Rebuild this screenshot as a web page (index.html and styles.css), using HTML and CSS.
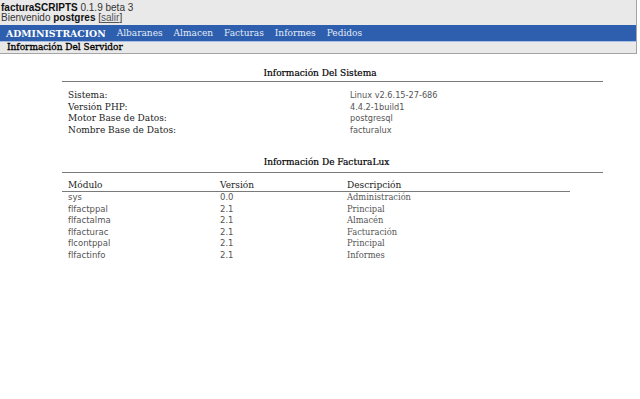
FILE: index.html
```html
<!DOCTYPE html>
<html lang="es">
<head>
    <meta charset="UTF-8">
    <title>facturaSCRIPTS</title>
    <link rel="stylesheet" href="styles.css">
</head>
<body>

    <div class="top">
        <div class="brand"><b>facturaSCRIPTS</b> 0.1.9 beta 3</div>
        <div class="welcome">Bienvenido <b>postgres</b> [<a href="#">salir</a>]</div>
        <div class="menu">
            <a class="module" href="#">ADMINISTRACION</a>
            <a href="#">Albaranes</a>
            <a href="#">Almacen</a>
            <a href="#">Facturas</a>
            <a href="#">Informes</a>
            <a href="#">Pedidos</a>
        </div>
        <div class="subbar">Información Del Servidor</div>
    </div>

    <div class="section">
        <h2 class="title">Información Del Sistema</h2>
        <table class="info">
            <tr><th>Sistema:</th><td>Linux v2.6.15-27-686</td></tr>
            <tr><th>Versión PHP:</th><td>4.4.2-1build1</td></tr>
            <tr><th>Motor Base de Datos:</th><td>postgresql</td></tr>
            <tr><th>Nombre Base de Datos:</th><td>facturalux</td></tr>
        </table>
    </div>

    <div class="section">
        <h2 class="title second">Información De FacturaLux</h2>
        <table class="modules">
            <thead>
                <tr><th class="c1">Módulo</th><th class="c2">Versión</th><th class="c3">Descripción</th></tr>
            </thead>
            <tbody>
                <tr><td>sys</td><td>0.0</td><td class="desc">Administración</td></tr>
                <tr><td>flfactppal</td><td>2.1</td><td class="desc">Principal</td></tr>
                <tr><td>flfactalma</td><td>2.1</td><td class="desc">Almacén</td></tr>
                <tr><td>flfacturac</td><td>2.1</td><td class="desc">Facturación</td></tr>
                <tr><td>flcontppal</td><td>2.1</td><td class="desc">Principal</td></tr>
                <tr><td>flfactinfo</td><td>2.1</td><td class="desc">Informes</td></tr>
            </tbody>
        </table>
    </div>

</body>
</html>
```

FILE: styles.css
```css
* {
    margin: 0;
    padding: 0;
    box-sizing: border-box;
}

body {
    background: #ffffff;
    color: #222;
    font-family: "DejaVu Sans", sans-serif;
    font-size: 9px;
}

/* cabecera */
.top {
    width: 637px;
    background: #e9e9e9;
    border: 1px solid #a4a4a4;
    border-top: none;
    border-left: none;
}

.brand,
.welcome {
    font-family: "Liberation Sans", sans-serif;
    font-size: 10px;
    line-height: 10px;
    color: #333;
    padding-left: 1px;
}

.brand {
    padding-top: 3px;
}

.brand b,
.welcome b {
    color: #111;
}

.welcome a {
    color: #555;
}

.welcome {
    padding-bottom: 2px;
}

.menu {
    display: flex;
    gap: 11px;
    background: #2d5fae;
    border-bottom: 1px solid #a9c0e6;
    height: 17px;
    align-items: center;
    padding-left: 6px;
}

.menu a {
    font-family: "DejaVu Serif", serif;
    font-size: 9px;
    color: #e4ebf7;
    text-decoration: none;
}

.menu a.module {
    font-weight: bold;
    font-size: 9.3px;
    color: #ffffff;
}

.subbar {
    font-family: "DejaVu Serif", serif;
    font-size: 9px;
    line-height: 11px;
    padding-left: 7px;
    color: #000;
    -webkit-text-stroke: 0.3px #000;
}

/* secciones */
.section {
    width: 541px;
    margin-left: 62px;
}

.title {
    font-family: "DejaVu Serif", serif;
    font-size: 9px;
    font-weight: normal;
    text-align: center;
    line-height: 11px;
    padding-top: 14px;
    padding-bottom: 2px;
    padding-right: 25px;
    border-bottom: 1px solid #7a7a7a;
    color: #000;
    -webkit-text-stroke: 0.2px #000;
}

.title.second {
    padding-top: 21px;
    padding-bottom: 4px;
    padding-right: 12px;
}

table {
    border-collapse: collapse;
    margin-left: 6px;
}

.info {
    margin-top: 8px;
}

.info th {
    font-family: "DejaVu Serif", serif;
    font-weight: normal;
    text-align: left;
    width: 282px;
    color: #222;
}

.info th,
.info td {
    font-size: 9px;
    line-height: 11.5px;
}

.info td {
    font-size: 8.2px;
    color: #555;
}

.modules {
    margin-top: 7px;
    margin-left: 0;
    width: 508px;
}

.modules thead th {
    font-family: "DejaVu Serif", serif;
    font-weight: normal;
    text-align: left;
    font-size: 9px;
    line-height: 11px;
    border-bottom: 1px solid #7a7a7a;
    color: #222;
}

.modules .c1 {
    padding-left: 6px;
    width: 158px;
}

.modules .c2 {
    width: 127px;
}

.modules td {
    font-size: 8.5px;
    line-height: 11.5px;
    color: #555;
}

.modules td:first-child {
    padding-left: 6px;
}

.modules td.desc {
    font-family: "DejaVu Serif", serif;
    font-size: 8.3px;
}
```
